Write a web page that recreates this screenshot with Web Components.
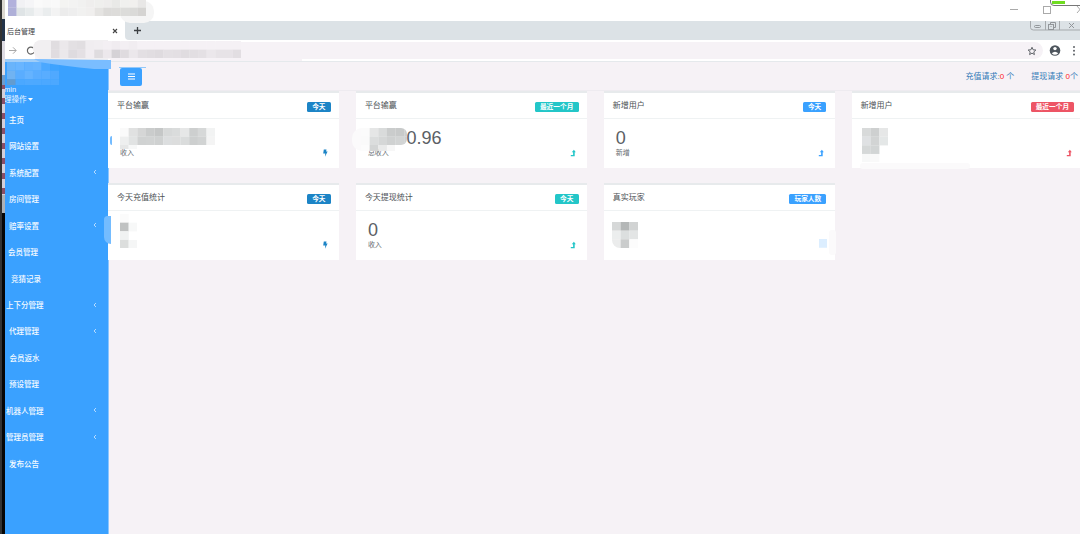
<!DOCTYPE html>
<html lang="zh-CN">
<head>
<meta charset="utf-8">
<title>后台管理</title>
<style>
    html, body { margin: 0; height: 100%; overflow: hidden; }
    body { background: #f6f2f6; font-family: "Liberation Sans", "Noto Sans CJK SC", sans-serif; color: #555b60; }
</style>
</head>
<body>
<admin-window></admin-window>

<script>
const attach = (el, html) => {
    el.attachShadow({ mode: "open" }).innerHTML = html;
};

const arrowUp = '<path d="M.8 7.300h3.900V3.200h1.100L3.900.8 1.800 3.200h1.300v2.700H.8z"/>';
const bolt = '<path d="M1.800.6h2.700L4.100 2.500h1.500L3 7.800l.3-3.200H1.200z"/>';

// rows of space separated hex colours, "." is an empty cell
class PixelMosaic extends HTMLElement {
    connectedCallback() {
        const size = parseFloat(this.getAttribute("size") || 8.65);
        const rows = this.getAttribute("rows").split("/").map((row) => row.trim().split(/\s+/));
        const cols = Math.max(...rows.map((row) => row.length));
        const cells = rows.map((row, y) => row.map((c, x) =>
            c === "." ? "" : `<rect x="${x * size}" y="${y * size}" width="${size + 0.1}" height="${size + 0.1}" fill="#${c}"/>`
        ).join("")).join("");
        attach(this, `
            <style>
                :host { position: absolute; display: block; overflow: hidden; }
                svg { display: block; }
            </style>
            <svg width="${cols * size}" height="${rows.length * size}">${cells}</svg>
        `);
    }
}

class WindowBar extends HTMLElement {
    connectedCallback() {
        attach(this, `
            <style>
                :host { display: flex; justify-content: flex-end; position: relative; height: 21px; background: #fff; }
                pixel-mosaic { left: 8px; top: -1px; z-index: 2; }
                .smear { position: absolute; left: 120px; top: 1px; width: 34px; height: 22px; border-radius: 10px; background: #f5f5f5; z-index: 1; }
                .battery { position: absolute; left: 1050px; top: -4px; width: 40px; height: 8px; border: 1.500px solid #777; border-radius: 4px; background: #fff; z-index: 2; }
                .battery i { display: block; width: 13px; height: 3px; margin: 4px 0 0 1px; background: #6fdc20; }
                svg { flex: none; }
            </style>
            <div class="smear"></div>
            <pixel-mosaic rows="b2b1dc f1f1f4 f5f5f7 fafafa f8f8f8 f9f9f9 f4f4f2 f3f3f2 f1f1f0 efeeed efefed eeedec e9e9e7 f0f0ee f1f0ee e8e7e6 / afb0d8 dfe4e6 e7ebec f2f3f4 eaedee f3f3f3 ececec eeeeee f1f1f0 f0efee e5e4e2 dcdbd9 dddcda dcdcda dadad8 d5d4d2"></pixel-mosaic>
            <svg width="76" height="21" fill="none" stroke="#aaa">
                <path d="M6 9.5h8"/><rect x="39.500" y="6.500" width="7" height="7"/><path d="M73 6l6 7m0-7l-6 7"/>
            </svg>
            <div class="battery"><i></i></div>
        `);
    }
}

class TabStrip extends HTMLElement {
    connectedCallback() {
        attach(this, `
            <style>
                :host { display: flex; height: 19px; position: relative; background: #dce2e6; }
                .tab { display: flex; box-sizing: border-box; width: 125px; justify-content: space-between; align-items: center; padding: 0 7px 0 7px; background: #fff; font-size: 7px; color: #3c4043; }
                svg { display: block; }
                .new { width: 24px; border-bottom-left-radius: 4px; background: #dce2e6; }
                .corner { background: #fff; }
                .controls { margin-left: auto; width: 50px; height: 10px; }
            </style>
            <div class="tab"><slot></slot>
                <svg width="6" height="6" stroke="#444" stroke-width="1.1"><path d="M1 1l4 4M5 1L1 5"/></svg>
            </div>
            <div class="corner"><div class="new">
                <svg width="24" height="19" stroke="#3c4043" stroke-width="1.3"><path d="M9 9.500h7M12.500 6v7"/></svg>
            </div></div>
            <svg class="controls" width="50" height="10" fill="none" stroke="#a5a9ac">
                <path d="M.5 0v6.500q0 2.500 3 2.500h47M15.500 0v9M29.500 0v9"/>
                <g stroke="#92969a"><rect x="4.500" y="4.500" width="6" height="2" rx="1"/><rect x="18.500" y="3.500" width="5" height="5"/><path d="M20.500 3V1.500h5v5H24M20.500 5.500h1M39 2l5 5m0-5l-5 5" /></g>
            </svg>
        `);
    }
}

class AddressBar extends HTMLElement {
    connectedCallback() {
        attach(this, `
            <style>
                :host { display: flex; align-items: center; position: relative; height: 21px; background: #fff; }
                .nav { flex: none; margin-left: 8px; }
                .box { flex: none; box-sizing: border-box; width: 1008px; height: 17px; border-radius: 0 9px 9px 0; background: #f6f2f6; display: flex; justify-content: flex-end; align-items: center; padding-right: 6px; }
                .tools { flex: none; }
                .edge { position: absolute; left: 110px; top: 17px; width: 192px; height: 4px; background: #f6f2f6; }
                .smear { position: absolute; left: 33px; top: 0; width: 75px; height: 20px; border-radius: 8px 0 0 12px; background: #f1eff1; }
                pixel-mosaic { left: 51px; top: 1px; }
            </style>
            <svg class="nav" width="27" height="17" fill="none" stroke="#a8a8a8"><path d="M1 8.500h7M5 5.300l3.200 3.200L5 11.700"/><path stroke="#666" stroke-width="1.200" d="M25.500 6.200a3.500 3.500 0 1 0 .5 4"/></svg>
            <div class="box"><svg width="10" height="10" viewBox="0 0 24 24" fill="none" stroke="#5f6368" stroke-width="2.400"><path d="M12 3l2.700 6.100 6.600.6-5 4.400 1.500 6.500-5.800-3.500-5.800 3.500 1.500-6.500-5-4.400 6.600-.6z"/></svg></div>
            <svg class="tools" width="37" height="17"><circle cx="12" cy="8.500" r="5.300" fill="#4d555d"/><circle cx="12" cy="6.600" r="1.700" fill="#fff"/><path d="M8.700 11.300q3.300-3.200 6.600 0-3.300 3-6.600 0" fill="#fff"/><g fill="#5f6368"><circle cx="31" cy="5" r="1"/><circle cx="31" cy="8.700" r="1"/><circle cx="31" cy="12.400" r="1"/></g></svg>
            <div class="edge"></div>
            <div class="smear"></div>
            <pixel-mosaic rows="e0dde0 ebe8eb e3e0e3 e1dee1 f0edf0 f1eef1 f3eff3 f0ecf0 f3eff3 f1edf1 f5f1f5 f5f1f5 f5f1f5 f5f1f5 f5f1f5 f5f1f5 f5f1f5 f5f1f5 f5f1f5 f5f1f5 f5f1f5 f5f1f5 / e0dce0 ebe8eb dedbdf e4e0e4 f1edf1 dfdcdf ece8ec d5d2d6 dfdbdf ebe7eb e3dfe3 e1dde1 dfdbdf e4e0e4 e3dfe3 e0dce0 e2dee2 e4e0e4 ebe7eb e7e3e7 e7e3e7 e2dee2"></pixel-mosaic>
        `);
    }
}

class NavItem extends HTMLElement {
    connectedCallback() {
        const indent = parseFloat(this.getAttribute("indent") || 5);
        attach(this, `
            <style>
                :host { display: flex; align-items: center; justify-content: space-between; height: 26.47px; padding: 0 11px 0 ${indent}px; font-size: 7.5px; font-weight: 500; white-space: nowrap; color: #f4faff; }
            </style>
            <slot></slot>
            ${this.hasAttribute("more") ? '<svg width="4" height="6" fill="none" stroke="#b5dbff"><path d="M3 1L1 3l2 2"/></svg>' : ""}
        `);
    }
}

class SideNav extends HTMLElement {
    connectedCallback() {
        attach(this, `
            <style>
                :host { display: block; flex: none; position: relative; box-sizing: border-box; width: 108.500px; border-right: 1px solid #8bc6ff; background: #3aa1ff; padding-left: 4px; }
                .rail { position: absolute; left: 0; top: -62px; bottom: 0; width: 4.500px; box-sizing: border-box; border-left: 2px solid #333; z-index: 3;
                    background: linear-gradient(#dcd8d0 0 20px, #24344a 20px 42px, #dedce4 42px 76px, #6f9ccc 76px 86px, transparent 86px 196px, #adb2b8 196px 214px, #060606 214px),
                        repeating-linear-gradient(#d5d0da 0 9px, #8b4f67 9px 15px); }
                .user { position: relative; height: 45px; font-size: 7.5px; line-height: 10px; color: #eaf5ff; }
                .user div { position: relative; white-space: nowrap; }
                .name { padding-top: 23.500px; }
                .role { display: flex; align-items: center; gap: 1px; }
                pixel-mosaic { left: 3px; top: 1px; height: 23px; }
                .smear { position: absolute; left: 0; top: -2px; z-index: 1; }
            </style>
            <svg class="smear" width="111" height="10"><path d="M4 0h31l76 1v9H94q-30-3-55-7H4z" fill="#7abdff"/><path d="M4 0h30l6 3H4z" fill="#9fcdf8"/></svg>
            <div class="rail"></div>
            <div class="user">
                <pixel-mosaic rows="69b4fb 69b5ff 62b1ff 65b3ff 4ba8ff 3ea3ff / 70b3f2 5aadff 65b3ff 5aadff 59adff 50a9ff / 639cd0 4ba8ff 4ea9ff 4da9ff 4ca8ff 4ca8ff"></pixel-mosaic>
                <div class="name">min</div>
                <div class="role">理操作<svg width="5" height="3" fill="#fff"><path d="M0 0h5L2.500 3z"/></svg></div>
            </div>
            <nav><slot></slot></nav>
        `);
    }
}

class RequestBar extends HTMLElement {
    connectedCallback() {
        attach(this, `
            <style>
                :host { display: flex; justify-content: space-between; align-items: center; box-sizing: border-box; height: 29.500px; padding: 3px 22px 0 12px; border-bottom: 1px solid #eeebf0; position: relative; }
                button { display: grid; place-items: center; width: 22px; height: 18px; padding: 0; border: 0; border-radius: 2px; background: #3aa1ff; }
                .line { position: absolute; left: 11px; top: 6px; width: 27px; height: 1px; background: #92c8fa; }
                .links { display: flex; gap: 17px; margin-top: 1px; font-size: 8px; line-height: 12px; color: #337ab7; white-space: nowrap; }
                b { font-weight: 400; color: #f22; }
            </style>
            <i class="line"></i>
            <button><svg width="7" height="7" stroke="#fff" stroke-width="1.100"><path d="M0 1h7M0 3.500h7M0 6h7"/></svg></button>
            <div class="links"><span>充值请求:<b>0</b> 个</span><span>提现请求 <b>0</b>个</span></div>
        `);
    }
}

class StatCard extends HTMLElement {
    connectedCallback() {
        const attr = (name) => this.getAttribute(name) || "";
        const color = attr("color");
        attach(this, `
            <style>
                :host { display: block; position: relative; box-sizing: border-box; height: 77.500px; border-top: 2.500px solid #e7eaec; background: #fff; }
                header { display: flex; align-items: center; justify-content: space-between; box-sizing: border-box; height: 26.500px; padding: 1.500px 8.500px 0 9px; border-bottom: 1px solid #eff2f3; font-size: 8px; line-height: 12px; color: #4c5155; }
                .tag { padding: 0 5.200px; height: 10.500px; border-radius: 1.500px; background: ${color}; color: #fff; font-size: 6.700px; line-height: 10.500px; font-weight: 700; margin-top: 2px; }
                .body { padding: 9px 11px 0 12px; }
                .value { height: 20px; font-size: 18px; line-height: 20px; color: #5b6065; }
                .value.shifted { padding-left: 38.500px; }
                .foot { display: flex; justify-content: space-between; align-items: center; height: 9px; font-size: 7px; line-height: 9px; color: #666c70; }
                svg { fill: ${color}; }
            </style>
            <header><span>${attr("heading")}</span><span class="tag">${attr("tag")}</span></header>
            <div class="body">
                <div class="value ${this.hasAttribute("shifted") ? "shifted" : ""}">${attr("value")}</div>
                <div class="foot"><span>${attr("note")}</span>${attr("icon") ? `<svg width="6" height="8">${attr("icon") === "bolt" ? bolt : arrowUp}</svg>` : ""}</div>
            </div>
            <slot></slot>
        `);
    }
}

class AdminWindow extends HTMLElement {
    connectedCallback() {
        attach(this, `
            <style>
                :host { display: flex; flex-direction: column; width: 1080px; height: 534px; overflow: hidden; }
                .app { display: flex; flex: 1; min-height: 0; position: relative; }
                main { flex: none; width: 992px; margin-left: -.5px; box-shadow: inset 0 1px #e5e9ec; }
                .cards { display: grid; grid-template-columns: repeat(4, 231.200px); gap: 14.500px 16.700px; }
                .blob { position: absolute; background: #74bcff; }
                .fade { position: absolute; background: #fbfafb; }
            </style>
            <window-bar></window-bar>
            <tab-strip>后台管理</tab-strip>
            <address-bar></address-bar>
            <div class="app">
                <side-nav>
                    <nav-item>主页</nav-item>
                    <nav-item>网站设置</nav-item>
                    <nav-item more>系统配置</nav-item>
                    <nav-item>房间管理</nav-item>
                    <nav-item more>赔率设置</nav-item>
                    <nav-item indent="4">会员管理</nav-item>
                    <nav-item indent="7">竞猜记录</nav-item>
                    <nav-item indent="2" more>上下分管理</nav-item>
                    <nav-item more>代理管理</nav-item>
                    <nav-item indent="5.500">会员返水</nav-item>
                    <nav-item>预设管理</nav-item>
                    <nav-item indent="2" more>机器人管理</nav-item>
                    <nav-item indent="2" more>管理员管理</nav-item>
                    <nav-item>发布公告</nav-item>
                </side-nav>
                <main>
                    <request-bar></request-bar>
                    <div class="cards">
                        <stat-card heading="平台输赢" tag="今天" color="#1c84c6" note="收入" icon="bolt">
                            <pixel-mosaic style="left:12px;top:35px" rows="fafafa e0e1e1 d5d6d6 cacccc c5c7c7 d7d9d9 dadcdc e6e7e7 cdcfcf d6d8d8 f2f3f3 / eeefef e1e3e3 d0d2d2 d1d3d3 cfd1d1 dcdedf dcdddd dadcdc cdcfcf d1d3d3 f4f4f4"></pixel-mosaic>
                            <pixel-mosaic style="left:12px;top:52px;height:4px" rows="e6e7e7 f7f8f8"></pixel-mosaic>
                            <i class="blob" style="left:1.500px;top:43px;width:2px;height:9px;border-radius:2px 0 0 2px"></i>
                        </stat-card>
                        <stat-card heading="平台输赢" tag="最近一个月" color="#23c6c8" value="0.96" shifted note="总收入" icon="up">
                            <i class="fade" style="left:-4px;top:35px;width:22px;height:23px;border-radius:10px"></i>
                            <pixel-mosaic style="left:5px;top:35px;width:46px;border-radius:0 6px 6px 0" rows="fbfbfb e5e6e6 d9dbdb cacccc c8caca cccece / fafafa dbdddd d5d7d7 cfd1d1 d2d4d4 cdcfcf"></pixel-mosaic>
                            <pixel-mosaic style="left:5px;top:52px;height:6px" rows="fcfcfc d3d5d5 e9eaea f7f7f7"></pixel-mosaic>
                        </stat-card>
                        <stat-card heading="新增用户" tag="今天" color="#3aa1ff" value="0" note="新增" icon="up"></stat-card>
                        <stat-card heading="新增用户" tag="最近一个月" color="#ed5565" icon="up">
                            <pixel-mosaic style="left:10px;top:35px" rows="d8dada ced0d0 e6e7e7 / dfe1e3 d2d4d4 e4e7e7 / d5d8d8 d2d5d5 . / f7f8f8 f9f9f9 ."></pixel-mosaic>
                            <i class="fade" style="left:8px;top:70px;width:110px;height:6px;border-radius:3px"></i>
                        </stat-card>
                        <stat-card heading="今天充值统计" tag="今天" color="#1c84c6" icon="bolt">
                            <pixel-mosaic style="left:12px;top:29px" rows="fbfbfb . / c0c2c2 f7f8f8 / f0f2f2 . / dcdedd f5f6f6"></pixel-mosaic>
                            <i class="blob" style="left:-4px;top:31px;width:7px;height:28px;border-radius:7px 0 0 14px"></i>
                        </stat-card>
                        <stat-card heading="今天提现统计" tag="今天" color="#23c6c8" value="0" note="收入" icon="up"></stat-card>
                        <stat-card heading="真实玩家" tag="玩家人数" color="#3aa1ff">
                            <pixel-mosaic style="left:8px;top:37.500px;border-radius:0 0 0 8px" rows="d6d8d8 b4b7b7 d1d3d3 / eceeee dcdfdf e3e5e5 / ebecec cacccc fcfcfc"></pixel-mosaic>
                            <pixel-mosaic style="left:215px;top:54.500px" rows="dceeff"></pixel-mosaic>
                            <i class="fade" style="left:225px;top:45px;width:7px;height:25px;border-radius:3px"></i>
                        </stat-card>
                    </div>
                </main>
            </div>
        `);
    }
}

customElements.define("pixel-mosaic", PixelMosaic);
customElements.define("window-bar", WindowBar);
customElements.define("tab-strip", TabStrip);
customElements.define("address-bar", AddressBar);
customElements.define("nav-item", NavItem);
customElements.define("side-nav", SideNav);
customElements.define("request-bar", RequestBar);
customElements.define("stat-card", StatCard);
customElements.define("admin-window", AdminWindow);
</script>
</body>
</html>
